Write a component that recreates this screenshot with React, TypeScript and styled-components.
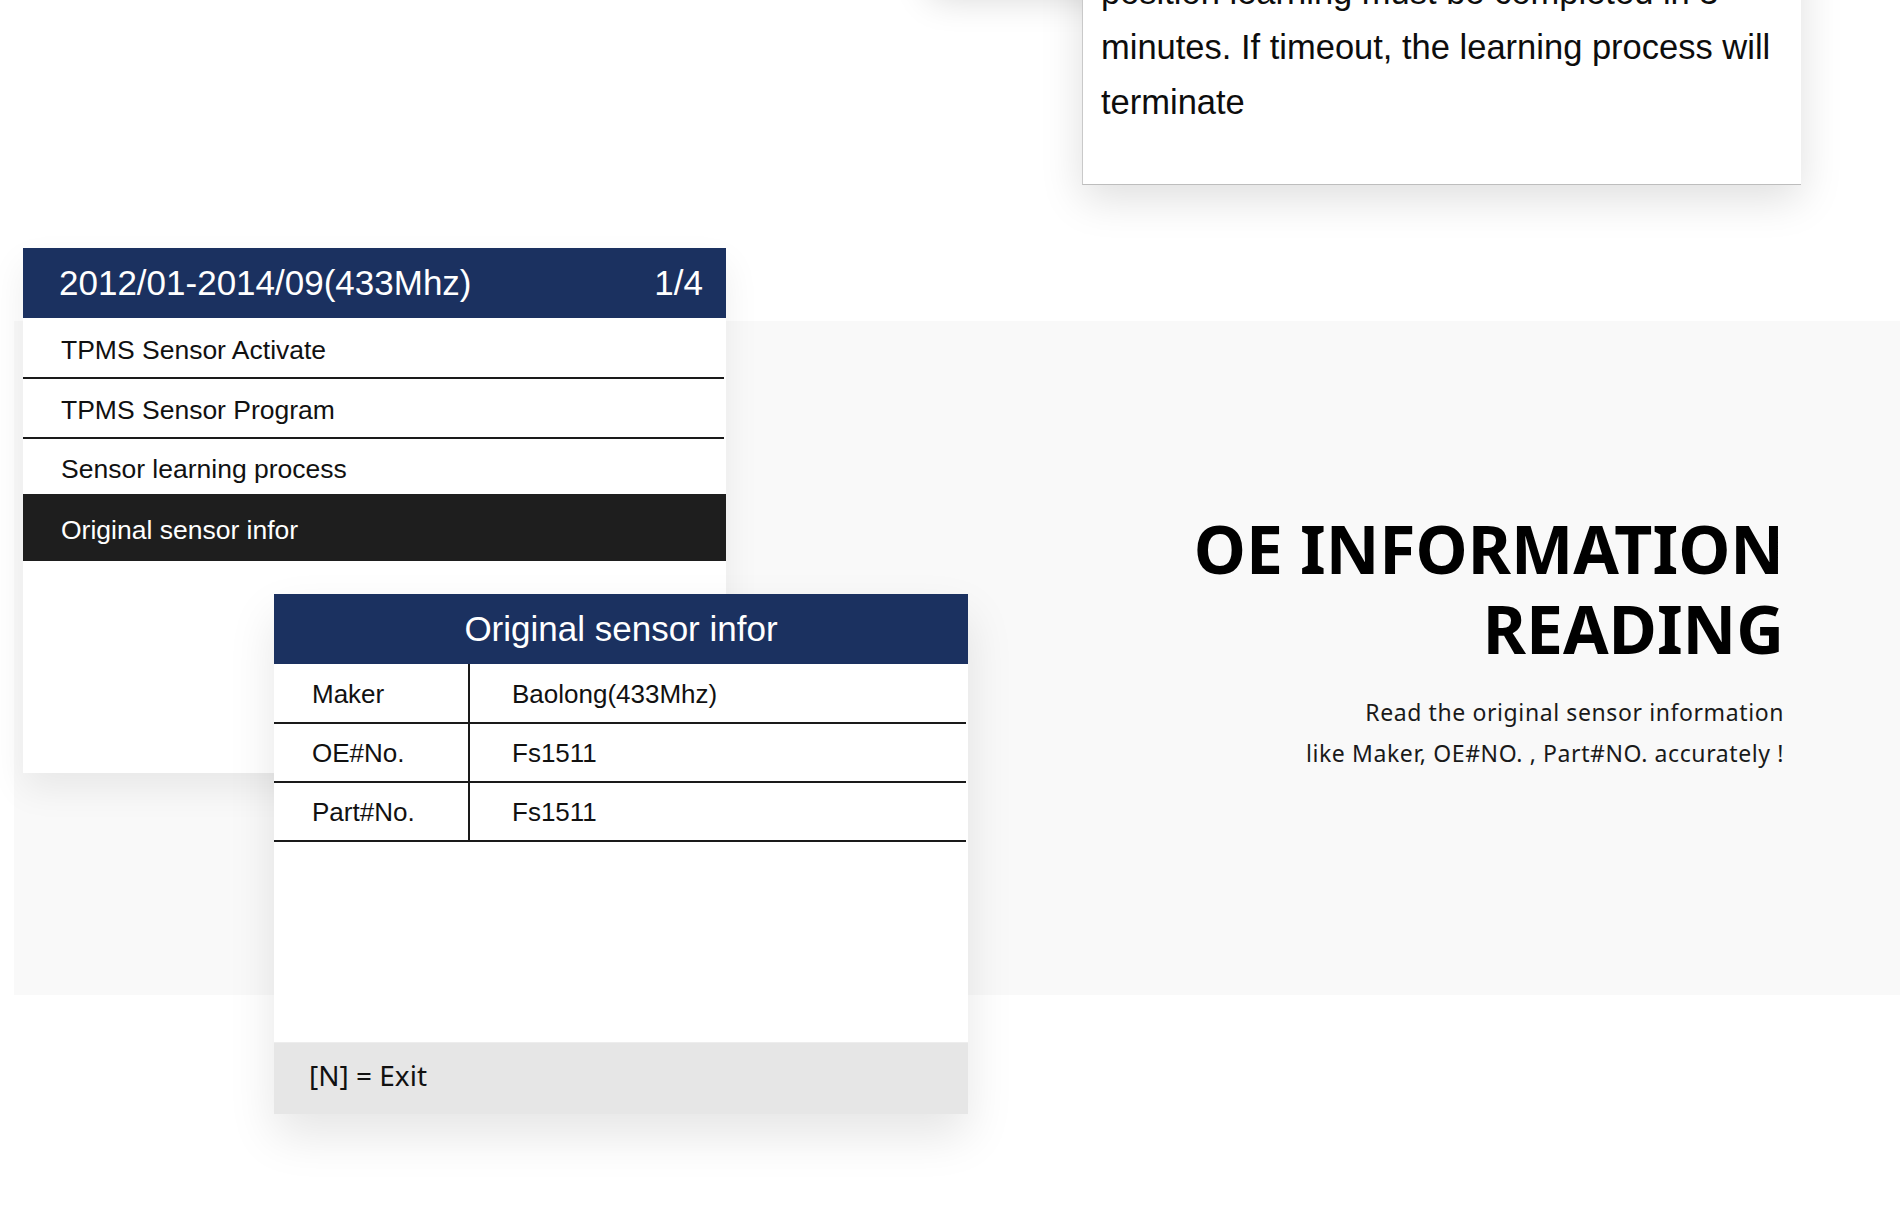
import React from "react";
import styled, { createGlobalStyle } from "styled-components";

const GlobalStyle = createGlobalStyle`
  html, body {
    margin: 0;
    padding: 0;
    background: #ffffff;
  }
  body {
    font-family: "Liberation Sans", Arial, sans-serif;
    color: #111;
    overflow: hidden;
  }
  * { box-sizing: border-box; }
`;

const NAVY = "#1b3160";

const Page = styled.div`
  position: relative;
  width: 1900px;
  height: 1216px;
  overflow: hidden;
  background: #ffffff;
`;

const TopSection = styled.section`
  position: relative;
  height: 321px;
  display: flex;
  justify-content: flex-end;
  align-items: flex-start;
  padding-right: 99px;
`;

const GhostCard = styled.div`
  position: absolute;
  left: 930px;
  top: -160px;
  width: 420px;
  height: 150px;
  background: #fff;
  box-shadow: 0 8px 34px rgba(0, 0, 0, 0.16);
`;

const TipCard = styled.div`
  position: relative;
  width: 719px;
  margin-top: -65px;
  padding: 30px 8px 54px 18px;
  background: #ffffff;
  border-left: 1px solid #c9c9c9;
  border-bottom: 1px solid #bdbdbd;
  box-shadow: 0 14px 40px rgba(0, 0, 0, 0.13);
  font-family: "Liberation Sans", Arial, sans-serif;
  font-size: 34.5px;
  line-height: 55px;
  color: #0d0d0d;
`;

const Band = styled.section`
  margin-left: 14px;
  height: 674px;
  background: #f9f9f9;
  display: flex;
  justify-content: space-between;
  align-items: flex-start;
  padding-right: 116px;
`;

const Stack = styled.div`
  display: grid;
  margin-top: -73px;
  margin-left: 9px;
  > * {
    grid-area: 1 / 1;
  }
`;

const MenuCard = styled.div`
  width: 703px;
  height: 525px;
  align-self: start;
  justify-self: start;
  background: #ffffff;
  box-shadow: 0 16px 34px rgba(0, 0, 0, 0.07);
  display: flex;
  flex-direction: column;
`;

const ScreenHeader = styled.div<{ $center?: boolean }>`
  height: 70px;
  flex: none;
  background: ${NAVY};
  color: #ffffff;
  display: flex;
  align-items: center;
  justify-content: ${(p) => (p.$center ? "center" : "space-between")};
  padding: ${(p) => (p.$center ? "0" : "0 23px 0 36px")};
  font-family: "Liberation Sans", Arial, sans-serif;
  font-size: 35px;
`;

const MenuRow = styled.div<{ $h: number; $selected?: boolean; $line?: boolean }>`
  height: ${(p) => p.$h}px;
  flex: none;
  display: flex;
  align-items: center;
  padding-left: 38px;
  padding-top: 5px;
  margin-right: ${(p) => (p.$selected ? "0" : "2px")};
  font-size: 26.5px;
  color: ${(p) => (p.$selected ? "#ffffff" : "#111111")};
  background: ${(p) => (p.$selected ? "#1e1e1e" : "transparent")};
  border-bottom: ${(p) => (p.$line ? "2px solid #1a1a1a" : "none")};
`;

const Dialog = styled.div`
  width: 694px;
  height: 520px;
  margin-left: 251px;
  margin-top: 346px;
  align-self: start;
  justify-self: start;
  background: #ffffff;
  box-shadow: 0 22px 44px rgba(0, 0, 0, 0.1);
  display: flex;
  flex-direction: column;
`;

const InfoTable = styled.div`
  display: grid;
  grid-template-columns: 196px 1fr;
  margin-right: 2px;
`;

const Cell = styled.div<{ $h: number; $label?: boolean }>`
  height: ${(p) => p.$h}px;
  display: flex;
  align-items: center;
  padding-left: ${(p) => (p.$label ? "38px" : "42px")};
  padding-top: 2px;
  font-size: 26px;
  color: #111;
  border-bottom: 2px solid #1a1a1a;
  border-right: ${(p) => (p.$label ? "2px solid #1a1a1a" : "none")};
`;

const Spacer = styled.div`
  flex: 1;
`;

const Footer = styled.div`
  height: 72px;
  flex: none;
  background: #e6e6e6;
  border-top: 1px solid #ededed;
  display: flex;
  align-items: center;
  padding-left: 35px;
  padding-bottom: 8px;
  font-family: "Noto Sans", "Open Sans", sans-serif;
  font-size: 28px;
  color: #111;
`;

const TextBlock = styled.div`
  margin-top: 187px;
  display: flex;
  flex-direction: column;
  align-items: flex-end;
  text-align: right;
`;

const Title = styled.h2`
  margin: 0;
  font-family: "Noto Sans", sans-serif;
  font-weight: 700;
  font-size: 66px;
  line-height: 80px;
  letter-spacing: 0;
  color: #000;
`;

const Subtitle = styled.p`
  margin: 24px 0 0;
  font-family: "Noto Sans", sans-serif;
  font-size: 23px;
  letter-spacing: 0.6px;
  line-height: 41px;
  color: #1a1a1a;
`;

const menuItems = [
  { label: "TPMS Sensor Activate", h: 61, line: true },
  { label: "TPMS Sensor Program", h: 60, line: true },
  { label: "Sensor learning process", h: 55, line: false },
  { label: "Original sensor infor", h: 67, line: false, selected: true },
];

const infoRows = [
  { label: "Maker", value: "Baolong(433Mhz)", h: 60 },
  { label: "OE#No.", value: "Fs1511", h: 59 },
  { label: "Part#No.", value: "Fs1511", h: 59 },
];

export default function App() {
  return (
    <Page>
      <GlobalStyle />
      <TopSection>
        <GhostCard />
        <TipCard>
          position learning must be completed in 3 minutes. If timeout, the
          learning process will terminate
        </TipCard>
      </TopSection>
      <Band>
        <Stack>
          <MenuCard>
            <ScreenHeader>
              <span>2012/01-2014/09(433Mhz)</span>
              <span>1/4</span>
            </ScreenHeader>
            {menuItems.map((m) => (
              <MenuRow key={m.label} $h={m.h} $line={m.line} $selected={m.selected}>
                {m.label}
              </MenuRow>
            ))}
          </MenuCard>
          <Dialog>
            <ScreenHeader $center>Original sensor infor</ScreenHeader>
            <InfoTable>
              {infoRows.map((r) => (
                <React.Fragment key={r.label}>
                  <Cell $h={r.h} $label>
                    {r.label}
                  </Cell>
                  <Cell $h={r.h}>{r.value}</Cell>
                </React.Fragment>
              ))}
            </InfoTable>
            <Spacer />
            <Footer>[N] = Exit</Footer>
          </Dialog>
        </Stack>
        <TextBlock>
          <Title>
            OE INFORMATION
            <br />
            READING
          </Title>
          <Subtitle>
            Read the original sensor information
            <br />
            like Maker, OE#NO. , Part#NO. accurately !
          </Subtitle>
        </TextBlock>
      </Band>
    </Page>
  );
}
